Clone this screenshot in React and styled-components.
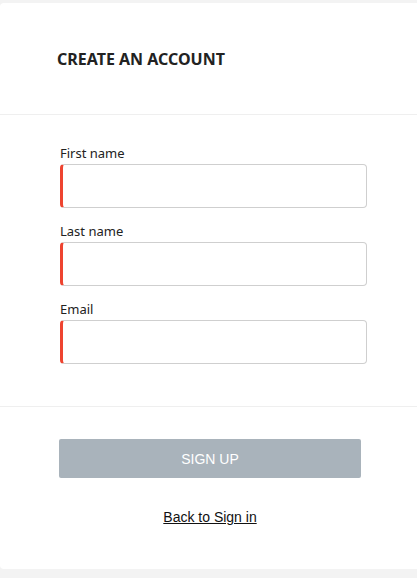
import React from 'react';
import styled, { createGlobalStyle } from 'styled-components';

const GlobalStyle = createGlobalStyle`
  html, body {
    margin: 0;
    padding: 0;
    background: #f3f3f3;
    overflow: hidden;
  }
  * {
    box-sizing: border-box;
  }
`;

const Card = styled.div`
  margin-top: 3px;
  width: 421px;
  height: 566px;
  background: #fff;
  border-radius: 4px;
  display: flex;
  flex-direction: column;
`;

const Header = styled.div`
  height: 112px;
  padding: 0 57px;
  display: flex;
  align-items: center;
  border-bottom: 1px solid #efefef;
`;

const Title = styled.h1`
  margin: 0;
  font-family: 'Noto Sans', sans-serif;
  font-size: 16px;
  font-weight: 700;
  color: #222;
`;

const Form = styled.form`
  padding: 29px 54px 42px 60px;
  display: flex;
  flex-direction: column;
  gap: 14px;
  border-bottom: 1px solid #efefef;
`;

const Field = styled.label`
  display: flex;
  flex-direction: column;
  gap: 2px;
`;

const Label = styled.span`
  font-family: 'Noto Sans', sans-serif;
  font-size: 13px;
  line-height: 18px;
  color: #222;
`;

const Input = styled.input`
  height: 44px;
  width: 100%;
  border: 1px solid #cfcfcf;
  border-left: 3px solid ${(p) => (p.$invalid ? '#ee4430' : '#cfcfcf')};
  border-radius: 4px;
  padding: 0 10px;
  font-family: 'Noto Sans', sans-serif;
  font-size: 13px;
  outline: none;
`;

const Footer = styled.div`
  padding: 32px 60px 0 59px;
  display: flex;
  flex-direction: column;
  align-items: center;
  gap: 31px;
`;

const SubmitButton = styled.button`
  width: 302px;
  height: 39px;
  border: none;
  border-radius: 2px;
  background: #a9b3bb;
  color: #fff;
  font-family: 'Liberation Sans', Arial, sans-serif;
  font-size: 14px;
  text-transform: uppercase;
`;

const BackLink = styled.a`
  font-family: 'Liberation Sans', Arial, sans-serif;
  font-size: 14px;
  line-height: 16px;
  color: #111;
  text-decoration: underline;
`;

const fields = [
  { id: 'firstName', label: 'First name', type: 'text' },
  { id: 'lastName', label: 'Last name', type: 'text' },
  { id: 'email', label: 'Email', type: 'email' },
];

export default function App() {
  return (
    <>
      <GlobalStyle />
      <Card>
        <Header>
          <Title>CREATE AN ACCOUNT</Title>
        </Header>
        <Form onSubmit={(e) => e.preventDefault()}>
          {fields.map((f) => (
            <Field key={f.id}>
              <Label>{f.label}</Label>
              <Input type={f.type} name={f.id} $invalid />
            </Field>
          ))}
        </Form>
        <Footer>
          <SubmitButton type="button">Sign up</SubmitButton>
          <BackLink href="#">Back to Sign in</BackLink>
        </Footer>
      </Card>
    </>
  );
}
